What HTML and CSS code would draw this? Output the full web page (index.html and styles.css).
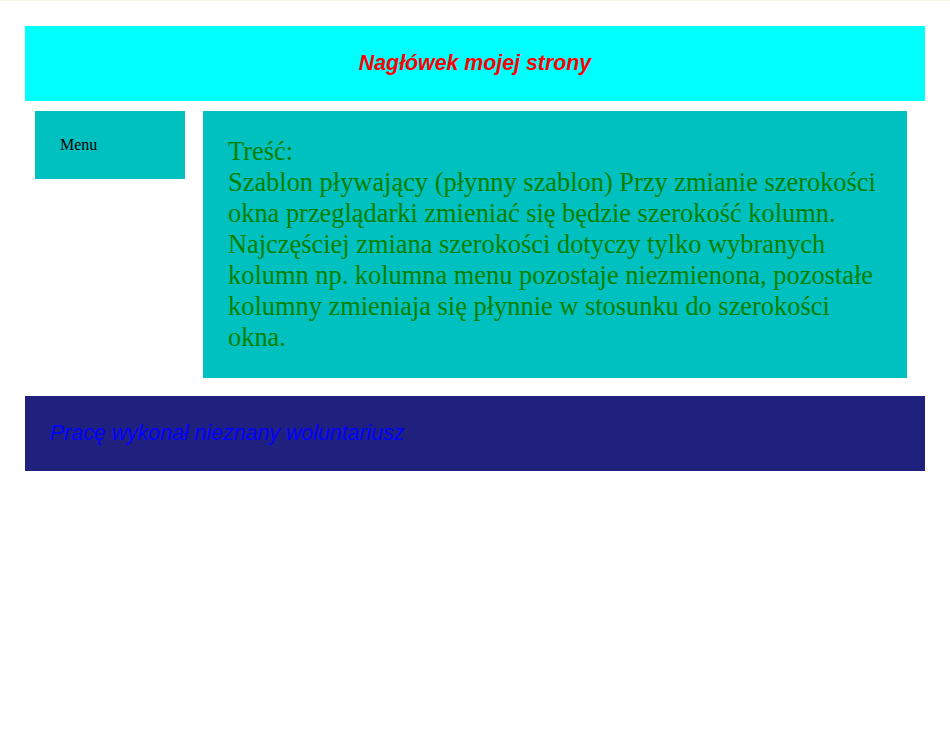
FILE: index.html
```html
<!DOCTYPE html>
<html lang="pl">
<head>
<meta charset="utf-8">
<title>Szablon pływający</title>
<link rel="stylesheet" href="styles.css">
</head>
<body>
<div class="page">
  <div class="header"><h1 class="title">Nagłówek mojej strony</h1></div>
  <div class="main">
    <div class="menu">Menu</div>
    <div class="content">Treść:<br>Szablon pływający (płynny szablon) Przy zmianie szerokości okna przeglądarki zmieniać się będzie szerokość kolumn. Najczęściej zmiana szerokości dotyczy tylko wybranych kolumn np. kolumna menu pozostaje niezmienona, pozostałe kolumny zmieniaja się płynnie w stosunku do szerokości okna.</div>
  </div>
  <div class="footer"><p class="credit">Pracę wykonał nieznany woluntariusz</p></div>
</div>
</body>
</html>
```
FILE: styles.css
```css
html, body {
  margin: 0;
  padding: 0;
  background: #ffffff;
}
body {
  border-top: 1px solid #fcf6e8;
  font-family: "Liberation Serif", "Times New Roman", serif;
}
.page {
  width: 900px;
  padding: 25px 25px;
}
.header {
  height: 75px;
  background: #00ffff;
  display: flex;
  align-items: center;
  justify-content: center;
}
.title {
  margin: 0;
  font-family: "Liberation Sans", Arial, sans-serif;
  font-size: 16pt;
  font-weight: bold;
  font-style: italic;
  color: #ff0000;
}
.main {
  display: flex;
  align-items: flex-start;
  gap: 18px;
  padding: 10px 18px 18px 10px;
}
.menu {
  width: 100px;
  padding: 25px;
  background: #00c0c0;
  font-size: 16px;
  line-height: 18px;
  color: #000000;
}
.content {
  flex: 1;
  padding: 25px;
  background: #00c0c0;
  font-size: 26.4px;
  line-height: 31px;
  color: #008000;
}
.footer {
  height: 75px;
  background: #20207f;
  display: flex;
  align-items: center;
  padding: 0 25px;
}
.credit {
  margin: 0;
  font-family: "Liberation Sans", Arial, sans-serif;
  font-size: 16pt;
  font-style: italic;
  color: #0000ff;
}
```
